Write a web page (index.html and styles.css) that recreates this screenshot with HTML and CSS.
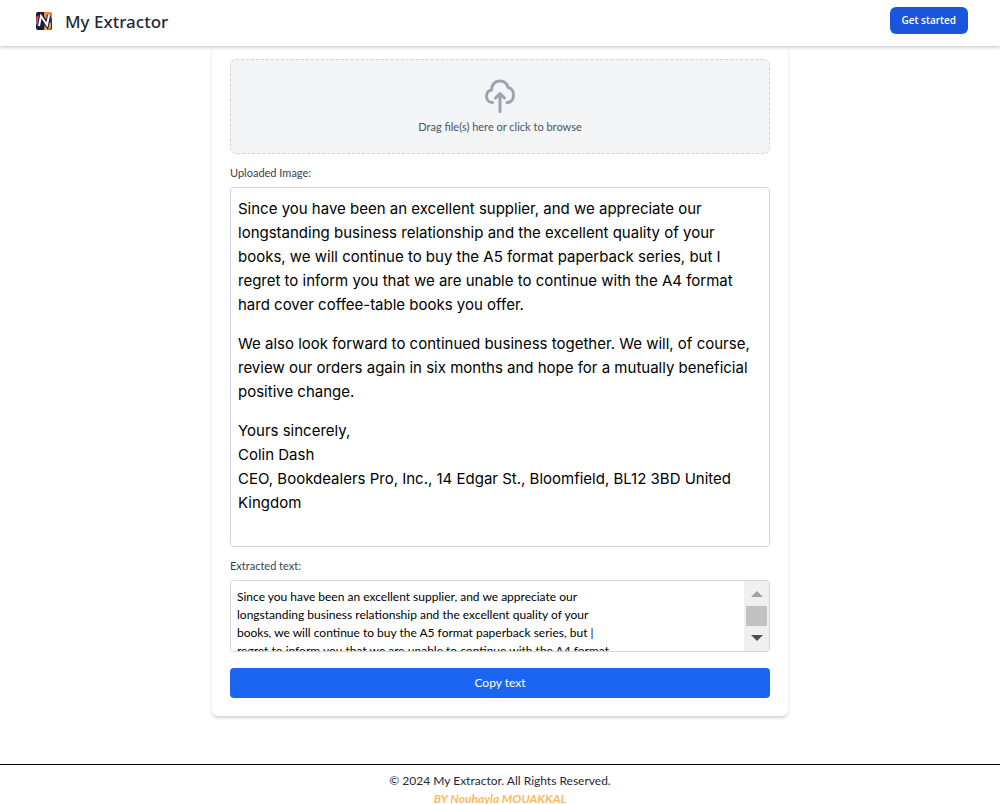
FILE: index.html
```html
<!DOCTYPE html>
<html lang="en">
<head>
<meta charset="utf-8">
<meta name="viewport" content="width=device-width, initial-scale=1">
<title>My Extractor</title>
<link rel="stylesheet" href="styles.css">
</head>
<body>
<header class="navbar">
  <a class="brand" href="#">
    <svg class="brand-logo" viewBox="0 0 18 18" aria-hidden="true">
      <rect x="1" y="0" width="16" height="18" rx="2" fill="#1d1b35"/>
      <path d="M9 0h7l1 2v5l-5 3-3-6z" fill="#f08a4b"/>
      <path d="M10 11l6-3v8l-2 2H9z" fill="#f5a142"/>
      <path d="M1 5l3-2v5l-2 4H1z" fill="#d83f4c"/>
      <path d="M1 10l3-3 1 6-3 1z" fill="#2e9bd8"/>
      <path d="M14 5l3 1v6l-3-2z" fill="#2c3b70"/>
      <path d="M4 14L6 4l6 9 2-10" fill="none" stroke="#1d1b35" stroke-width="4"/>
      <path d="M4 14L6 4l6 9 2-10" fill="none" stroke="#fff" stroke-width="2"/>
    </svg>
    <span class="brand-name">My Extractor</span>
  </a>
  <button class="start-button" type="button">Get started</button>
</header>

<main class="content">
  <section class="card">
    <button class="dropzone" type="button">
      <svg class="cloud" viewBox="0 0 36 36" fill="none" stroke="#9ca3af" stroke-width="3" stroke-linecap="round" stroke-linejoin="round" aria-hidden="true">
        <path d="M10.500 24.500C6.500 24.500 4.500 21.500 4.500 18.500C4.500 15 6.500 12.500 9.500 12C9.500 6.500 13 3 17.500 3C22 3 25 5.500 26 9.500C29.500 10 31.500 13.500 31.500 17C31.500 21.500 29 24.500 25 24.500"/>
        <path d="M18 33.500V15.500M13.500 20l4.500-4.500 4.500 4.500"/>
      </svg>
      <span>Drag file(s) here or click to browse</span>
    </button>

    <h2 class="label">Uploaded Image:</h2>
    <article class="letter">
      <p>Since you have been an excellent supplier, and we appreciate our<br>longstanding business relationship and the excellent quality of your<br>books, we will continue to buy the A5 format paperback series, but I<br>regret to inform you that we are unable to continue with the A4 format<br>hard cover coffee-table books you offer.</p>
      <p>We also look forward to continued business together. We will, of course,<br>review our orders again in six months and hope for a mutually beneficial<br>positive change.</p>
      <p>Yours sincerely,<br>Colin Dash<br>CEO, Bookdealers Pro, Inc., 14 Edgar St., Bloomfield, BL12 3BD United<br>Kingdom</p>
    </article>

    <label class="label" for="extracted">Extracted text:</label>
    <div class="text-box">
      <textarea class="extracted" id="extracted" readonly wrap="off">Since you have been an excellent supplier, and we appreciate our
longstanding business relationship and the excellent quality of your
books, we will continue to buy the A5 format paperback series, but |
regret to inform you that we are unable to continue with the A4 format
hard cover coffee-table books you offer.</textarea>
      <div class="scrollbar" aria-hidden="true">
        <svg class="arrow" viewBox="0 0 12 6"><path d="M0 6L6 0l6 6z" fill="#a3a3a3"/></svg>
        <div class="thumb"></div>
        <svg class="arrow" viewBox="0 0 12 6"><path d="M0 0h12L6 6z" fill="#505050"/></svg>
      </div>
    </div>
    <button class="copy-button" type="button">Copy text</button>
  </section>
</main>

<footer class="footer">
  <p>© 2024 My Extractor. All Rights Reserved.</p>
  <p class="author">BY Nouhayla MOUAKKAL</p>
</footer>
</body>
</html>
```

FILE: styles.css
```css
* {
  box-sizing: border-box;
}

body {
  height: 100vh;
  margin: 0;
  overflow: hidden;
  background: #fff;
  color: #1f2937;
  font-family: Lato, "Open Sans", sans-serif;
  font-size: 12px;
  line-height: 18px;
}

p,
h2 {
  margin: 0;
}

button {
  font: inherit;
  cursor: pointer;
}

.navbar {
  position: relative;
  z-index: 1;
  display: flex;
  align-items: center;
  justify-content: space-between;
  padding: 7px 32px 12px 35px;
  background: #fff;
  box-shadow: 0 1px 4px rgba(0, 0, 0, 0.25);
}

.brand {
  display: flex;
  align-items: center;
  gap: 12px;
  color: #1f2937;
  text-decoration: none;
}

.brand-logo {
  width: 18px;
  height: 18px;
}

.brand-name {
  padding-top: 2px;
  font-family: "Noto Sans", sans-serif;
  font-size: 17px;
  font-weight: 500;
  line-height: 25px;
}

.start-button {
  padding: 0 12px;
  border: 0;
  border-radius: 6px;
  background: #1a56db;
  color: #fff;
  font-family: "Open Sans", sans-serif;
  font-size: 10px;
  font-weight: 600;
  line-height: 27px;
}

.content {
  padding: 0 16px 48px;
}

.card {
  display: flex;
  flex-direction: column;
  max-width: 576px;
  margin: 0 auto;
  padding: 13px 18px 18px;
  border-radius: 6px;
  background: #fff;
  box-shadow: 0 2px 3px rgba(0, 0, 0, 0.18);
}

.dropzone {
  display: flex;
  flex-direction: column;
  align-items: center;
  gap: 4px;
  padding: 18px 16px 17px;
  border: 1px dashed #d1d5db;
  border-radius: 6px;
  background: #f3f4f6;
  color: #4b5563;
  font-size: 11px;
  line-height: 18px;
}

.cloud {
  width: 36px;
  height: 36px;
}

.label {
  margin: 10px 0 5px;
  color: #374151;
  font-size: 11px;
  font-weight: 400;
  line-height: 18px;
}

.letter {
  display: flex;
  flex-direction: column;
  gap: 15px;
  min-height: 360px;
  padding: 9px 7px 31px;
  border: 1px solid #d1d5db;
  border-radius: 4px;
  color: #000;
  font-family: Inter, sans-serif;
  font-size: 15px;
  line-height: 24px;
}

.text-box {
  display: flex;
  height: 72px;
  overflow: hidden;
  border: 1px solid #d1d5db;
  border-radius: 4px;
}

.extracted {
  flex: 1;
  min-width: 0;
  padding: 7px 6px 0;
  border: 0;
  outline: 0;
  overflow: hidden;
  resize: none;
  background: #fff;
  color: #000;
  font: inherit;
}

.scrollbar {
  display: flex;
  flex-direction: column;
  align-items: center;
  justify-content: space-between;
  width: 25px;
  padding: 10px 2px;
  background: #f0f0f0;
}

.arrow {
  width: 12px;
  height: 6px;
}

.thumb {
  width: 21px;
  height: 20px;
  background: #c1c1c1;
}

.copy-button {
  margin-top: 16px;
  padding: 6px 16px;
  border: 0;
  border-radius: 4px;
  background: #1c64f2;
  color: #fff;
}

.footer {
  padding-top: 7px;
  border-top: 1px solid #000;
  text-align: center;
}

.author {
  color: #fdba5b;
  font-style: italic;
  font-weight: 700;
}
```
